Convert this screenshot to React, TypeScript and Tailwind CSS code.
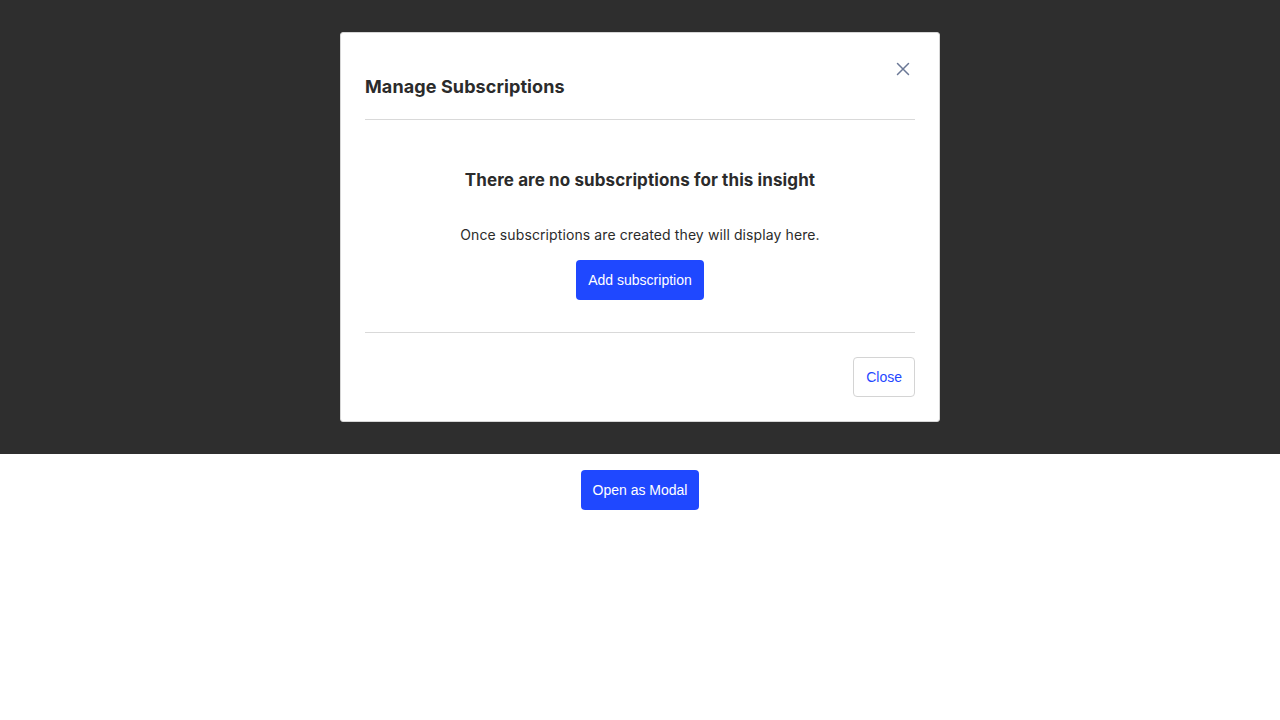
import React from 'react';

const CloseIcon: React.FC = () => (
    <svg width="14" height="14" viewBox="0 0 14 14" fill="none" stroke="currentColor" strokeWidth="1.5" strokeLinecap="round">
        <path d="M1.5 1.5l11 11M12.5 1.5l-11 11" />
    </svg>
);

export default function App() {
    return (
        <div className="min-h-screen bg-white" style={{ fontFamily: 'Inter, "Liberation Sans", sans-serif' }}>
            {/* Overlay area with dialog */}
            <div className="bg-[#2e2e2e] py-8 flex justify-center">
                <div className="w-[600px] bg-white border border-[#d6d6d6] rounded-[3px] px-6 pb-6 pt-6 text-[#2b2b2b]">
                    <div className="flex justify-between items-start border-b border-[#d9d9d9] pb-[18px]">
                        <h2 className="pt-4 text-[18px] leading-7 font-bold tracking-[0.1px]">Manage Subscriptions</h2>
                        <button className="w-6 h-6 flex items-center justify-center text-[#6b7896]">
                            <CloseIcon />
                        </button>
                    </div>

                    <div className="flex flex-col items-center pt-12 pb-8 border-b border-[#d9d9d9]">
                        <h3 className="text-[17px] leading-6 font-bold tracking-[0.1px]">There are no subscriptions for this insight</h3>
                        <p className="mt-[33px] text-[14px] leading-5 tracking-[0.1px]">Once subscriptions are created they will display here.</p>
                        <button
                            className="mt-[15px] h-10 px-3 rounded-[4px] bg-[#1f48ff] text-white text-[14px]"
                            style={{ fontFamily: '"Liberation Sans", Arial, sans-serif' }}
                        >
                            Add subscription
                        </button>
                    </div>

                    <div className="flex justify-end pt-6">
                        <button
                            className="h-10 px-3 rounded-[4px] border border-[#d4d4d4] bg-white text-[#1f48ff] text-[14px]"
                            style={{ fontFamily: '"Liberation Sans", Arial, sans-serif' }}
                        >
                            Close
                        </button>
                    </div>
                </div>
            </div>

            <div className="flex justify-center pt-4">
                <button
                    className="h-10 px-3 rounded-[4px] bg-[#1f48ff] text-white text-[14px]"
                    style={{ fontFamily: '"Liberation Sans", Arial, sans-serif' }}
                >
                    Open as Modal
                </button>
            </div>
        </div>
    );
}
